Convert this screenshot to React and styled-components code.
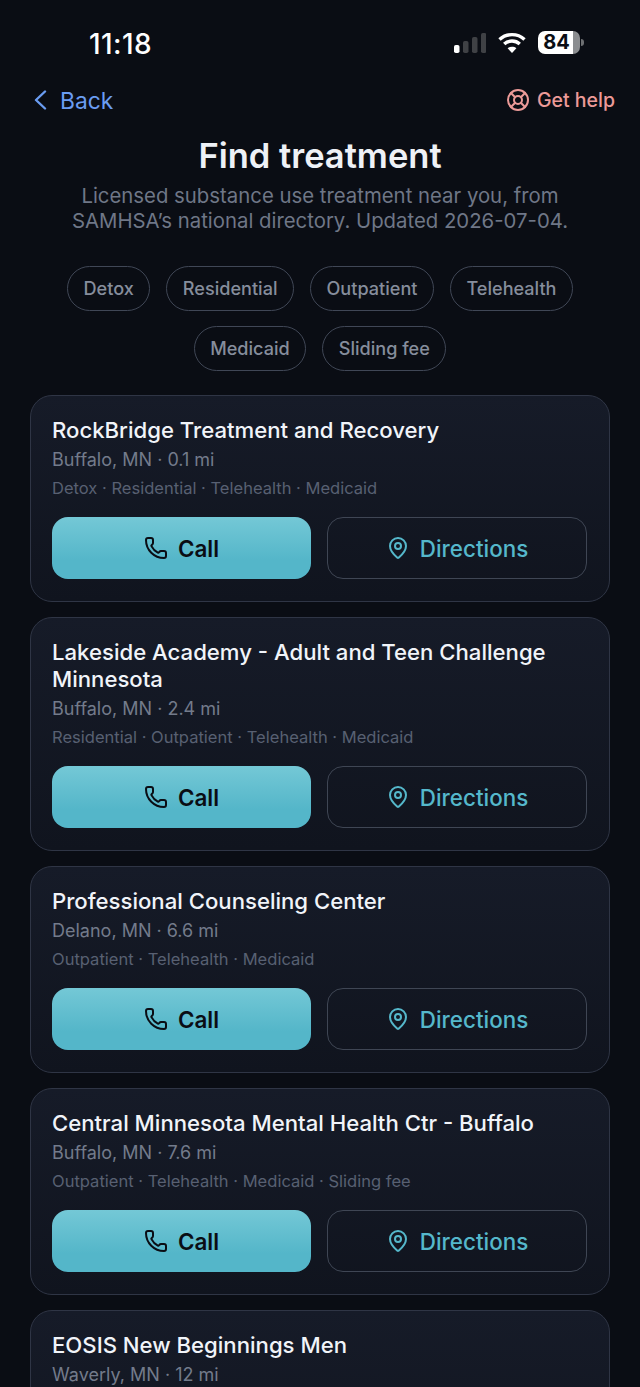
import React from "react";
import styled, { createGlobalStyle } from "styled-components";
import { LifeBuoy, MapPin, Phone } from "lucide-react";

const Global = createGlobalStyle`
  html, body { margin: 0; padding: 0; background: #0a0d14; height: 1387px; overflow: hidden; }
  * { box-sizing: border-box; }
  body { font-family: Inter, "Liberation Sans", sans-serif; }
`;

const Page = styled.div`
  width: 640px;
  height: 1387px;
  overflow: hidden;
  background: #0a0d14;
  color: #f1f4f9;
`;

const StatusBar = styled.div`
  height: 75px;
  padding: 29px 56px 0 89px;
  display: flex;
  justify-content: space-between;
  align-items: flex-start;
`;

const Time = styled.div`
  font-size: 28px;
  line-height: 30px;
  font-weight: 500;
  letter-spacing: 0.4px;
  color: #fff;
`;

const StatusIcons = styled.div`
  display: flex;
  align-items: center;
  gap: 12px;
  height: 27px;
`;

const Battery = styled.div`
  position: relative;
  width: 42px;
  height: 23px;
  margin-right: 4px;
  padding-right: 5px;
  border-radius: 7px;
  background: linear-gradient(90deg, #fff 0 84%, #8b8d90 84% 100%);
  color: #0a0d14;
  font-size: 20px;
  line-height: 23px;
  font-weight: 700;
  text-align: center;
  &::after {
    content: "";
    position: absolute;
    right: -4px;
    top: 8px;
    width: 3px;
    height: 7px;
    border-radius: 0 3px 3px 0;
    background: #6d6f72;
  }
`;

const TopBar = styled.div`
  height: 50px;
  padding: 0 25px 0 34px;
  display: flex;
  justify-content: space-between;
  align-items: center;
`;

const BackLink = styled.a`
  display: flex;
  align-items: center;
  gap: 13px;
  font-size: 22.8px;
  font-weight: 400;
  color: #6a9cf2;
`;

const HelpLink = styled.a`
  display: flex;
  align-items: center;
  gap: 7px;
  font-size: 19.5px;
  font-weight: 500;
  color: #ec9a98;
`;

const Title = styled.h1`
  margin: 11px 0 0;
  font-size: 34.5px;
  line-height: 39px;
  font-weight: 600;
  text-align: center;
  color: #eef1f6;
`;

const Subtitle = styled.p`
  margin: 8px 0 0;
  font-size: 20.35px;
  line-height: 25px;
  font-weight: 400;
  text-align: center;
  color: #6f7787;
`;

const Chips = styled.div`
  margin: 33px 30px 0;
  display: flex;
  flex-wrap: wrap;
  justify-content: center;
  gap: 15px 16px;
`;

const Chip = styled.span`
  height: 45px;
  padding: 0 15.5px 1px;
  display: inline-flex;
  align-items: center;
  border: 1.5px solid #404756;
  border-radius: 23px;
  font-size: 18.1px;
  font-weight: 500;
  color: #868d9c;
`;

const CardList = styled.div`
  margin: 24px 30px 0;
  display: flex;
  flex-direction: column;
  gap: 15.5px;
`;

const Card = styled.article`
  padding: 21px 22px 21.5px 21px;
  border: 1px solid #2f3545;
  border-radius: 22px;
  background: linear-gradient(180deg, #161b28 0%, #10141e 100%);
`;

const Name = styled.h2`
  margin: 0;
  font-size: 22.15px;
  line-height: 27px;
  font-weight: 500;
  color: #f1f4f9;
`;

const Place = styled.div`
  margin-top: 3.5px;
  font-size: 18px;
  line-height: 24px;
  color: #737b8b;
`;

const Tags = styled.div`
  margin-top: 4px;
  font-size: 16.55px;
  line-height: 24px;
  color: #586072;
`;

const Actions = styled.div`
  margin-top: 17.5px;
  display: grid;
  grid-template-columns: 259px 1fr;
  gap: 16px;
`;

const ActionButton = styled.button`
  height: 62px;
  display: flex;
  align-items: center;
  justify-content: center;
  gap: 10px;
  border-radius: 16px;
  font-family: inherit;
  font-size: 22.4px;
`;

const CallButton = styled(ActionButton)`
  border: 0;
  background: linear-gradient(180deg, #74c8d6 0%, #54b6c9 70%);
  color: #0a0d14;
  font-weight: 600;
`;

const DirectionsButton = styled(ActionButton)`
  border: 1.5px solid #3f4654;
  background: transparent;
  color: #55b8cb;
  font-weight: 500;
`;

const Chevron = () => (
  <svg width="13" height="20" viewBox="0 0 13 20" fill="none" stroke="currentColor" strokeWidth="2.4" strokeLinecap="round" strokeLinejoin="round">
    <path d="M11 1.5 L2 10 L11 18.5" />
  </svg>
);

const Signal = () => (
  <svg width="32.5" height="20" viewBox="0 0 32.5 20">
    <rect x="0" y="12" width="5.5" height="8" rx="1.8" fill="#fff" />
    <rect x="9" y="8" width="5.5" height="12" rx="1.8" fill="#3f4145" />
    <rect x="18" y="4" width="5.5" height="16" rx="1.8" fill="#3f4145" />
    <rect x="27" y="0" width="5.5" height="20" rx="1.8" fill="#3f4145" />
  </svg>
);

const Wifi = () => (
  <svg width="28" height="21" viewBox="0 0 28 21" fill="none" stroke="#fff" strokeWidth="3.4">
    <path d="M1.5 7.5 C8.5 1 19.5 1 26.5 7.5" />
    <path d="M6.2 12 C10.6 8 17.4 8 21.8 12" />
    <path d="M14 21 L9.6 16.2 C12 14.3 16 14.3 18.4 16.2 Z" fill="#fff" stroke="none" />
  </svg>
);

const facilities = [
  { name: "RockBridge Treatment and Recovery", place: "Buffalo, MN · 0.1 mi", tags: "Detox · Residential · Telehealth · Medicaid" },
  { name: "Lakeside Academy - Adult and Teen Challenge Minnesota", place: "Buffalo, MN · 2.4 mi", tags: "Residential · Outpatient · Telehealth · Medicaid" },
  { name: "Professional Counseling Center", place: "Delano, MN · 6.6 mi", tags: "Outpatient · Telehealth · Medicaid" },
  { name: "Central Minnesota Mental Health Ctr - Buffalo", place: "Buffalo, MN · 7.6 mi", tags: "Outpatient · Telehealth · Medicaid · Sliding fee" },
  { name: "EOSIS New Beginnings Men", place: "Waverly, MN · 12 mi", tags: "Residential · Outpatient" },
];

const chips = ["Detox", "Residential", "Outpatient", "Telehealth", "Medicaid", "Sliding fee"];

export default function App() {
  return (
    <Page>
      <Global />
      <StatusBar>
        <Time>11:18</Time>
        <StatusIcons>
          <Signal />
          <Wifi />
          <Battery>84</Battery>
        </StatusIcons>
      </StatusBar>
      <TopBar>
        <BackLink><Chevron />Back</BackLink>
        <HelpLink><LifeBuoy size={24} strokeWidth={2} />Get help</HelpLink>
      </TopBar>
      <Title>Find treatment</Title>
      <Subtitle>Licensed substance use treatment near you, from<br />SAMHSA’s national directory. Updated 2026-07-04.</Subtitle>
      <Chips>{chips.map((c) => <Chip key={c}>{c}</Chip>)}</Chips>
      <CardList>
        {facilities.map((f) => (
          <Card key={f.name}>
            <Name>{f.name}</Name>
            <Place>{f.place}</Place>
            <Tags>{f.tags}</Tags>
            <Actions>
              <CallButton><Phone size={24} strokeWidth={2} />Call</CallButton>
              <DirectionsButton><MapPin size={24} strokeWidth={2} />Directions</DirectionsButton>
            </Actions>
          </Card>
        ))}
      </CardList>
    </Page>
  );
}
